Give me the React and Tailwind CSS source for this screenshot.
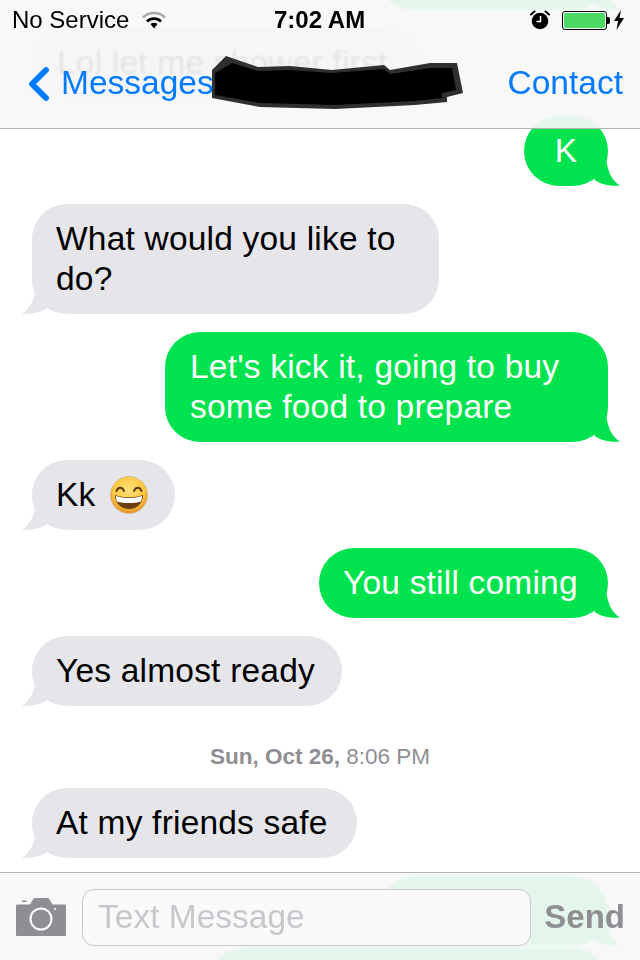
import { useId } from 'react';
import { ChevronLeft } from 'lucide-react';

const font = { fontFamily: '"Liberation Sans", Arial, sans-serif' };

function Tail({ side, color }) {
  return (
    <svg
      viewBox="0 0 30 30"
      className={`absolute bottom-0 w-[30px] h-[30px] ${side === 'right' ? 'right-[-12px]' : 'left-[-10px] -scale-x-100'}`}
      fill={color}
    >
      <path d="M16 0 C17 14 21 24 30 29.5 C24 30.5 12 29.5 5 24 L0 10 Z" />
    </svg>
  );
}

function Bubble({ side, lines, className = '', children }) {
  const isRight = side === 'right';
  return (
    <div className={`relative rounded-[35px] text-[33.5px] leading-[40px] tracking-[0.2px] whitespace-nowrap ${isRight ? 'self-end mr-[32px] bg-[#00e34f] text-white' : 'self-start ml-[32px] bg-[#e5e5ea] text-black'} ${className}`}>
      <Tail side={side} color={isRight ? '#00e34f' : '#e5e5ea'} />
      <div className="relative">
        {lines && lines.map((l) => <div key={l}>{l}</div>)}
        {children}
      </div>
    </div>
  );
}

function Grin() {
  const id = useId();
  return (
    <svg viewBox="0 0 38 38" className="w-[38px] h-[38px]">
      <defs>
        <radialGradient id={id} cx="50%" cy="35%" r="65%">
          <stop offset="0%" stopColor="#ffe27a" />
          <stop offset="65%" stopColor="#fcc63f" />
          <stop offset="100%" stopColor="#e5912a" />
        </radialGradient>
      </defs>
      <circle cx="19" cy="19" r="18.5" fill={`url(#${id})`} stroke="#c9a873" strokeWidth="0.6" />
      <path d="M6.5 15 C8 10.5 12.5 10.5 14 15" fill="none" stroke="#5b3a12" strokeWidth="2" strokeLinecap="round" />
      <path d="M24 15 C25.5 10.5 30 10.5 31.5 15" fill="none" stroke="#5b3a12" strokeWidth="2" strokeLinecap="round" />
      <path d="M5 19 C13 22 25 22 33 19 C33 27 27 33 19 33 C11 33 5 27 5 19 Z" fill="#6b3d10" />
      <path d="M6 20 C13 22.5 25 22.5 32 20 C32 23 31.5 24.5 31 25.5 C24 27.5 14 27.5 7 25.5 C6.5 24.5 6 23 6 20 Z" fill="#fff" />
    </svg>
  );
}

function Wifi() {
  return (
    <svg viewBox="0 0 26 20" className="w-[26px] h-[20px] ml-[12px]" fill="none">
      <path d="M2 7.5 C8 1.5 18 1.5 24 7.5" stroke="#a9a9a9" strokeWidth="2.6" />
      <path d="M6 11.5 C10 7.7 16 7.7 20 11.5" stroke="#000" strokeWidth="2.6" />
      <path d="M9.5 14 C11.5 12.3 14.5 12.3 16.5 14 L13 18.5 Z" fill="#000" />
    </svg>
  );
}

function Alarm() {
  return (
    <svg viewBox="0 0 20 20" className="w-[20px] h-[20px]">
      <circle cx="10" cy="11" r="8.3" fill="#000" />
      <path d="M1 4.5 L4.5 1.5 M15.5 1.5 L19 4.5" stroke="#000" strokeWidth="2" strokeLinecap="round" />
      <path d="M10.5 6 V11.5 H6.5" fill="none" stroke="#fff" strokeWidth="1.5" />
    </svg>
  );
}

function Battery() {
  return (
    <div className="flex items-center ml-[12px]">
      <div className="w-[45px] h-[19px] rounded-[3px] border border-black p-[1px]">
        <div className="w-full h-full rounded-[2px] bg-[#4cd964]" />
      </div>
      <div className="w-[3px] h-[7px] bg-black rounded-r-[2px]" />
      <svg viewBox="0 0 10 20" className="w-[10px] h-[20px] ml-[4px]">
        <path d="M7 0 L0 11 H4 L2.5 20 L10 8 H5.5 Z" fill="#000" />
      </svg>
    </div>
  );
}

function Scribble() {
  return (
    <svg viewBox="0 0 252 54" className="absolute left-[212px] top-[56px] w-[252px] h-[54px]">
      <path
        d="M0 14 L14 0 L46 11 L78 10 L120 14 L172 9 L178 14 L218 7 L245 7 L251 37 L235 41 L235 46 L203 49 L123 53 L48 51 L0 42 Z"
        fill="#2f2f2f"
      />
      <path
        d="M3 17 L20 7 L46 15 L78 14 L120 17 L172 13 L178 18 L218 12 L240 12 L244 34 L230 37 L230 42 L203 45 L123 49 L48 47 L3 39 Z"
        fill="#000"
      />
    </svg>
  );
}

function Camera() {
  return (
    <svg viewBox="0 0 50 38" className="w-[50px] h-[38px] shrink-0">
      <path
        d="M1.5 6.5 H14 L17 1.5 C17.500 0.6 18 0 19.500 0 H31 C32.500 0 33 0.6 33.500 1.500 L36.500 6.5 H48.500 C49.500 6.5 50 7 50 8 V36.500 C50 37.500 49.500 38 48.500 38 H1.500 C0.500 38 0 37.500 0 36.500 V8 C0 7 0.500 6.500 1.500 6.500 Z"
        fill="#8e8e93"
      />
      <rect x="6" y="2.500" width="4.500" height="1.500" fill="#8e8e93" />
      <circle cx="25" cy="21" r="10.500" fill="none" stroke="#fff" strokeWidth="2" />
      <circle cx="39" cy="11" r="1" fill="#fff" />
    </svg>
  );
}

export default function App() {
  return (
    <div className="relative w-[640px] h-[960px] overflow-hidden bg-white" style={font}>
      <div className="flex flex-col gap-[18px] mt-[-60px]">
        <Bubble side="right" className="w-[230px] h-[70px]" />
        <Bubble side="left" className="pl-[25px] pr-[35px] py-[15px]" lines={['Lol let me shower first']} />
        <Bubble side="right" className="w-[84px] py-[15px] text-center" lines={['K']} />
        <Bubble side="left" className="w-[407px] pl-[24px] py-[15px]" lines={['What would you like to', 'do?']} />
        <Bubble side="right" className="w-[443px] pl-[25px] py-[15px]" lines={["Let's kick it, going to buy", 'some food to prepare']} />
        <Bubble side="left" className="w-[143px] h-[70px] pl-[24px] flex items-center">
          <div className="flex items-center gap-[14px]">
            <span>Kk</span>
            <Grin />
          </div>
        </Bubble>
        <Bubble side="right" className="w-[289px] pl-[24px] py-[15px]" lines={['You still coming']} />
        <Bubble side="left" className="w-[310px] pl-[24px] py-[15px]" lines={['Yes almost ready']} />
        <div className="mt-[18px] -mb-[2px] h-[30px] text-center text-[22.500px] leading-[30px] text-[#8e8e93]">
          <span className="font-bold">Sun, Oct 26,</span> 8:06 PM
        </div>
        <Bubble side="left" className="w-[325px] pl-[24px] py-[15px]" lines={['At my friends safe']} />
        <Bubble side="right" className="w-[228px] h-[70px]" />
        <Bubble side="right" className="w-[400px] h-[70px] -mt-[16px]" />
      </div>

      <header className="absolute top-0 left-0 w-full h-[129px] bg-[#f7f7f8]/92 border-b border-[#b2b2b2] backdrop-blur-[1px]">
        <div className="relative h-[40px] flex items-center justify-between pl-[12px] pr-[16px] text-[24px] text-black">
          <div className="flex items-center">
            <span>No Service</span>
            <Wifi />
          </div>
          <span className="absolute left-[274px] font-bold">7:02 AM</span>
          <div className="flex items-center">
            <Alarm />
            <Battery />
          </div>
        </div>
        <div className="h-[88px] flex items-center justify-between pl-[11px] pr-[17px] pb-[1px] text-[33.500px] text-[#007aff]">
          <div className="flex items-center">
            <ChevronLeft size={56} strokeWidth={2.500} absoluteStrokeWidth={false} className="-mr-[6px] mt-[1px]" />
            <span>Messages</span>
          </div>
          <span>Contact</span>
        </div>
        <Scribble />
      </header>

      <footer className="absolute bottom-0 left-0 w-full h-[88px] bg-[#f7f7f8]/92 border-t border-[#b2b2b2] flex items-center pl-[16px] pr-[15px] pt-[1px] backdrop-blur-[1px]">
        <Camera />
        <div className="ml-[16px] w-[449px] h-[57px] rounded-[12px] border border-[#c8c8cc] bg-[#fafafa] pl-[15px] flex items-center text-[33.500px] text-[#c7c7cd]">
          Text Message
        </div>
        <span className="ml-auto text-[33px] font-bold text-[#8e8e93]">Send</span>
      </footer>
    </div>
  );
}
